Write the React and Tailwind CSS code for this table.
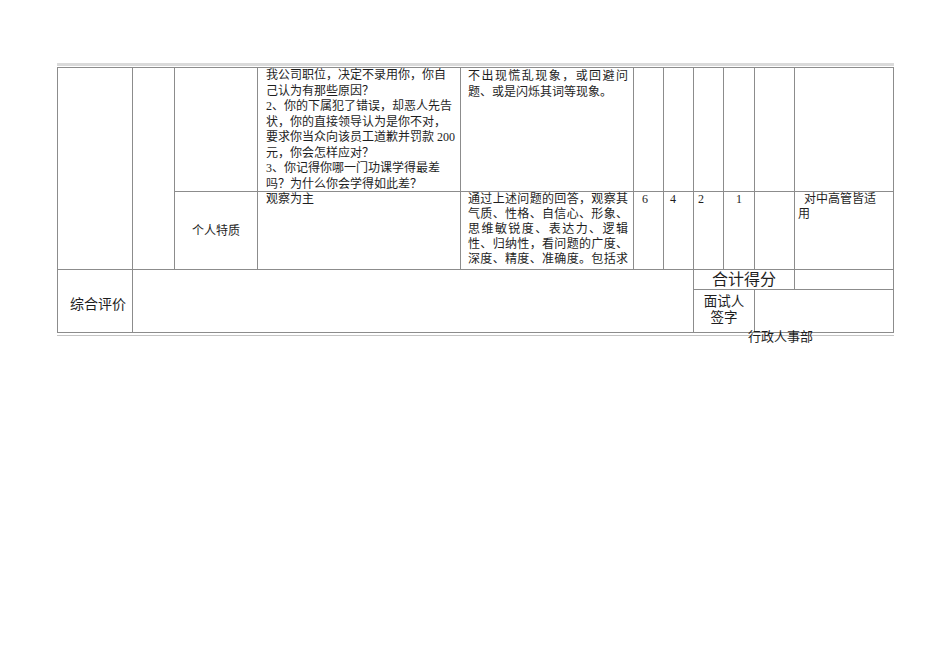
import React from 'react'

const q1 = [
    '我公司职位，决定不录用你，你自',
    '己认为有那些原因？',
    '2、你的下属犯了错误，却恶人先告',
    '状，你的直接领导认为是你不对，',
    '要求你当众向该员工道歉并罚款 200',
    '元，你会怎样应对？',
    '3、你记得你哪一门功课学得最差',
    '吗？为什么你会学得如此差？',
]

const note1 = ['不出现慌乱现象，或回避问', '题、或是闪烁其词等现象。']

const note2 = [
    '通过上述问题的回答，观察其',
    '气质、性格、自信心、形象、',
    '思维敏锐度、表达力、逻辑',
    '性、归纳性，看问题的广度、',
    '深度、精度、准确度。包括求',
]

function Cell({ className = '', children }) {
    return <div className={`bg-white overflow-hidden ${className}`}>{children}</div>
}

export default function App() {
    return (
        <div
            className="w-[950px] h-[672px] bg-white overflow-hidden text-[#1e1e1e]"
            style={{ fontFamily: '"Liberation Serif", "Noto Sans CJK SC", serif' }}
        >
            <div className="ml-[57px] w-[837px] pt-[63px]">
                <div className="h-[3px] bg-[#dadada]" />
                <div className="h-px" />
                <div className="grid gap-px p-px bg-[#8c8c8c] grid-cols-[74px_41px_82px_202px_172px_29px_29px_29px_30px_39px_98px] grid-rows-[123px_77px_19px_42px] text-[12px]">
                    {/* row 1 */}
                    <Cell className="row-span-2" />
                    <Cell className="row-span-2" />
                    <Cell />
                    <Cell className="pl-[8px] leading-[15.5px]">
                        {q1.map((l) => (
                            <div key={l} className="whitespace-nowrap">{l}</div>
                        ))}
                    </Cell>
                    <Cell className="pl-[7px] leading-[16px]">
                        {note1.map((l, i) => (
                            <div
                                key={l}
                                className={`w-[160px] whitespace-nowrap ${i === 0 ? '[text-align-last:justify]' : ''}`}
                            >
                                {l}
                            </div>
                        ))}
                    </Cell>
                    <Cell />
                    <Cell />
                    <Cell />
                    <Cell />
                    <Cell />
                    <Cell />

                    {/* row 2 */}
                    <Cell className="flex items-center justify-center">个人特质</Cell>
                    <Cell className="pl-[8px] leading-[15px]">观察为主</Cell>
                    <Cell className="pl-[7px] leading-[15px]">
                        {note2.map((l) => (
                            <div key={l} className="w-[160px] whitespace-nowrap [text-align-last:justify]">
                                {l}
                            </div>
                        ))}
                    </Cell>
                    <Cell className="pl-[8px] leading-[15px]">6</Cell>
                    <Cell className="pl-[6px] leading-[15px]">4</Cell>
                    <Cell className="pl-[4px] leading-[15px]">2</Cell>
                    <Cell className="pl-[12px] leading-[15px]">1</Cell>
                    <Cell />
                    <Cell className="pl-[3px] leading-[15px]">
                        <div className="pl-[6px]">对中高管皆适</div>
                        <div>用</div>
                    </Cell>

                    {/* bottom */}
                    <Cell className="row-span-2 flex items-center justify-center pt-[6px] pl-[6px] text-[14px]">
                        综合评价
                    </Cell>
                    <Cell className="col-span-6 row-span-2" />
                    <Cell className="col-span-3 flex items-center justify-center text-[16px] leading-[19px]">
                        合计得分
                    </Cell>
                    <Cell />
                    <Cell className="col-span-2 pt-[4px] text-center text-[13.5px] leading-[16px]">
                        面试人
                        <br />
                        签字
                    </Cell>
                    <Cell className="col-span-2" />
                </div>
                <div className="h-[2px]" />
                <div className="h-px bg-[#c4c4c4]" />
                <div className="ml-[691px] -mt-[6px] text-[13px] leading-[14px] whitespace-nowrap">
                    行政人事部
                </div>
            </div>
        </div>
    )
}
